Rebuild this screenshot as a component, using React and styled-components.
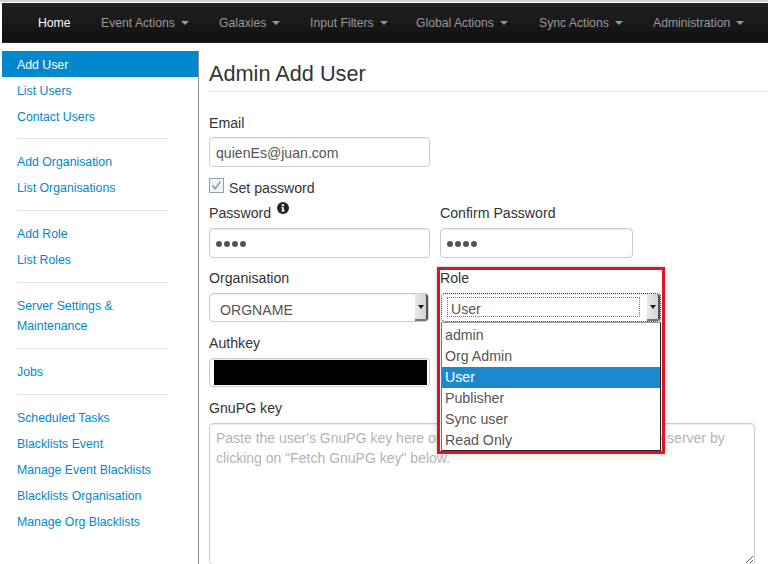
import React from "react";
import styled, { createGlobalStyle } from "styled-components";

const Global = createGlobalStyle`
  html, body { margin: 0; padding: 0; background: #fff; height: 564px; overflow: hidden; }
  body { font-family: "Liberation Sans", Arial, sans-serif; color: #333; }
  * { box-sizing: border-box; }
`;

const Page = styled.div`
  position: relative;
  width: 768px;
  height: 564px;
  overflow: hidden;
  padding-top: 3px;
  background: linear-gradient(#cfcfcf 0 2px, #fff 2px);
`;
const NavBar = styled.nav`
  margin-left: 2px;
  height: 40px;
  background: linear-gradient(#222222, #111111);
  border-bottom: 1px solid #252525;
  display: flex;
  align-items: center;
  padding-left: 36px;
  font-size: 12.2px;
`;
const NavItem = styled.a`
  color: ${(p) => (p.$active ? "#ffffff" : "#999999")};
  width: ${(p) => p.$w}px;
  flex: none;
  display: flex;
  align-items: center;
  gap: 6px;
  white-space: nowrap;
`;
const Caret = styled.span`
  width: 0;
  height: 0;
  border-left: 4px solid transparent;
  border-right: 4px solid transparent;
  border-top: 4px solid #999;
`;
const Body = styled.div`
  display: flex;
  margin-top: 8px;
  margin-left: 2px;
  height: 513px;
`;
const Sidebar = styled.aside`
  width: 197px;
  flex: none;
  border-right: 1px solid #8a8a8a;
  font-size: 12.3px;
`;
const SideLink = styled.a`
  display: block;
  padding: ${(p) => (p.$first ? "4px 15px 2px" : "3px 15px")};
  line-height: 20px;
  color: ${(p) => (p.$active ? "#fff" : "#0088cc")};
  background: ${(p) => (p.$active ? "#0088cc" : "transparent")};
`;
const SideDivider = styled.hr`
  margin: 9px 30px 10px 15px;
  height: 1px;
  border: 0;
  background: #e5e5e5;
`;
const Main = styled.main`
  flex: none;
  width: 558px;
  padding-left: 10px;
`;
const Title = styled.h2`
  margin: 0;
  height: 41px;
  width: 559px;
  border-bottom: 1px solid #e5e5e5;
  font-size: 21.7px;
  font-weight: 400;
  line-height: 46px;
  color: #333;
`;
const Row = styled.div`
  display: flex;
  gap: ${(p) => p.$gap ?? 10}px;
  margin-top: ${(p) => p.$top || 0}px;
`;
const Field = styled.div`
  width: ${(p) => p.$w || 221}px;
  flex: none;
`;
const Label = styled.label`
  display: flex;
  align-items: flex-start;
  gap: 6px;
  height: 20px;
  margin-top: ${(p) => p.$top || 0}px;
  font-size: 14.15px;
  line-height: 20px;
  color: #333;
`;
const Input = styled.div`
  height: ${(p) => p.$h || 30}px;
  width: ${(p) => p.$w || 221}px;
  margin-top: ${(p) => p.$top || 0}px;
  border: 1px solid #cccccc;
  border-radius: 4px;
  box-shadow: inset 0 1px 1px rgba(0, 0, 0, 0.075);
  padding: 0 6px;
  font-size: 14.1px;
  line-height: 30px;
  color: #555;
  background: #fff;
`;
const Dots = styled.span`
  display: flex;
  gap: 2px;
  height: 100%;
  align-items: center;
  padding-top: 2px;
`;
const Dot = styled.i`
  width: 6px;
  height: 6px;
  border-radius: 50%;
  background: #555;
`;
const Check = styled.div`
  display: flex;
  align-items: center;
  gap: 5px;
  margin-top: 11px;
  font-size: 14.15px;
  height: 20px;
  color: #333;
`;
const Box = styled.span`
  width: 15px;
  height: 15px;
  margin-top: -5px;
  border: 1px solid #8fa3b5;
  background: #f1f4f7;
  display: flex;
  align-items: center;
  justify-content: center;
`;
const Select = styled.div`
  position: relative;
  height: 29px;
  width: 220px;
  margin-left: ${(p) => (p.$focus ? 2 : 0)}px;
  border: ${(p) => (p.$focus ? "1px dotted #333" : "1px solid #ccc")};
  border-radius: 4px;
  background: #fff;
  font-size: 14.1px;
  line-height: 33px;
  color: #555;
  padding-left: 10px;
  box-shadow: inset 0 1px 1px rgba(0, 0, 0, 0.075);
`;
const Arrow = styled.span`
  position: absolute;
  right: 0;
  top: 0;
  bottom: 0;
  width: 13px;
  background: linear-gradient(90deg, #e8e8e8, #d4d4d4);
  border-right: 2px solid #555;
  border-bottom: 2px solid #777;
  border-radius: 0 3px 3px 0;
  display: flex;
  align-items: center;
  justify-content: center;
  &::after {
    content: "";
    border-left: 3px solid transparent;
    border-right: 3px solid transparent;
    border-top: 4px solid #111;
  }
`;
const FocusText = styled.span`
  position: absolute;
  left: 5px;
  top: 3px;
  width: 193px;
  height: 20px;
  border: 1px dotted #777;
  padding-left: 3px;
  line-height: 23px;
`;
const Redacted = styled.div`
  margin: 0 -4px 0 -2px;
  background: #000;
  position: relative;
  top: 1px;
  height: 25px;
`;
const TextArea = styled.textarea`
  display: block;
  width: 546px;
  height: 142px;
  margin-top: 5px;
  padding: 4px 6px;
  border: 1px solid #ccc;
  border-radius: 4px;
  box-shadow: inset 0 1px 1px rgba(0, 0, 0, 0.075);
  font-family: "Liberation Sans", Arial, sans-serif;
  font-size: 14px;
  line-height: 20px;
  background: #fff;
  &::placeholder {
    color: #b3b3b3;
    opacity: 1;
  }
`;
const Dropdown = styled.ul`
  position: absolute;
  left: 441px;
  top: 322px;
  width: 220px;
  height: 129px;
  margin: 0;
  padding: 2px 0 0;
  list-style: none;
  background: #fff;
  border: 1px solid #222;
  border-top-color: #999;
  border-left-color: #777;
  font-size: 14.2px;
  color: #555;
`;
const Option = styled.li`
  height: 21px;
  line-height: 21px;
  padding-left: 3px;
  background: ${(p) => (p.$active ? "#1e88cc" : "transparent")};
  color: ${(p) => (p.$active ? "#fff" : "#555")};
`;
const Highlight = styled.div`
  position: absolute;
  left: 437px;
  top: 267px;
  width: 228px;
  height: 187px;
  border: 3px solid #dc1426;
  box-shadow: 0 0 4px rgba(0, 0, 0, 0.25);
  pointer-events: none;
`;
const InfoIcon = styled.svg`
  width: 12px;
  height: 12px;
  margin-top: -1px;
`;

const Info = () => (
  <InfoIcon viewBox="0 0 12 12">
    <circle cx="6" cy="6" r="6" fill="#222" />
    <rect x="4.8" y="2.2" width="2.2" height="2" fill="#fff" />
    <path d="M4.2 5.2h2.8v3.3h1v1.1H4.2V8.5h1V6.3h-1z" fill="#fff" />
  </InfoIcon>
);

const nav = [
  ["Event Actions", 118],
  ["Galaxies", 91],
  ["Input Filters", 106],
  ["Global Actions", 123],
  ["Sync Actions", 114],
  ["Administration", 100],
];
const groups = [
  ["Add User", "List Users", "Contact Users"],
  ["Add Organisation", "List Organisations"],
  ["Add Role", "List Roles"],
  ["Server Settings & Maintenance"],
  ["Jobs"],
  ["Scheduled Tasks", "Blacklists Event", "Manage Event Blacklists", "Blacklists Organisation", "Manage Org Blacklists"],
];
const roles = ["admin", "Org Admin", "User", "Publisher", "Sync user", "Read Only"];

const PasswordDots = () => (
  <Dots>
    <Dot />
    <Dot />
    <Dot />
    <Dot />
  </Dots>
);

export default function App() {
  return (
    <Page>
      <Global />
      <NavBar>
        <NavItem $active $w={63}>Home</NavItem>
        {nav.map(([t, w]) => (
          <NavItem key={t} $w={w}>
            {t} <Caret />
          </NavItem>
        ))}
      </NavBar>
      <Body>
        <Sidebar>
          {groups.map((g, i) => (
            <React.Fragment key={i}>
              {i > 0 && <SideDivider />}
              {g.map((t) => (
                <SideLink key={t} $first={i === 0} $active={t === "Add User"}>{t}</SideLink>
              ))}
            </React.Fragment>
          ))}
        </Sidebar>
        <Main>
          <Title>Admin Add User</Title>
          <Label $top={21}>Email</Label>
          <Input $top={4}>quienEs@juan.com</Input>
          <Check>
            <Box>
              <svg width="11" height="11" viewBox="0 0 11 11">
                <path d="M1.5 5.5l2.8 3L9.5 1.5" fill="none" stroke="#5b8fb5" strokeWidth="1.2" />
              </svg>
            </Box>
            Set password
          </Check>
          <Row $top={5}>
            <Field>
              <Label>Password <Info /></Label>
            </Field>
            <Field $w={193}>
              <Label>Confirm Password</Label>
            </Field>
          </Row>
          <Row $top={5}>
            <Input><PasswordDots /></Input>
            <Input $w={193}><PasswordDots /></Input>
          </Row>
          <Row $top={10}>
            <Field><Label>Organisation</Label></Field>
            <Field $w={220}><Label>Role</Label></Field>
          </Row>
          <Row $top={5}>
            <Select>ORGNAME<Arrow /></Select>
            <Select $focus>
              <FocusText>User</FocusText>
              <Arrow />
            </Select>
          </Row>
          <Label $top={11}>Authkey</Label>
          <Input $top={5} $h={29}><Redacted /></Input>
          <Label $top={11}>GnuPG key</Label>
          <TextArea
            readOnly
            placeholder={'Paste the user\'s GnuPG key here or try to retrieve it from the CIRCL key server by clicking on "Fetch GnuPG key" below.'}
          />
        </Main>
      </Body>
      <Dropdown>
        {roles.map((r) => (
          <Option key={r} $active={r === "User"}>{r}</Option>
        ))}
      </Dropdown>
      <Highlight />
    </Page>
  );
}
